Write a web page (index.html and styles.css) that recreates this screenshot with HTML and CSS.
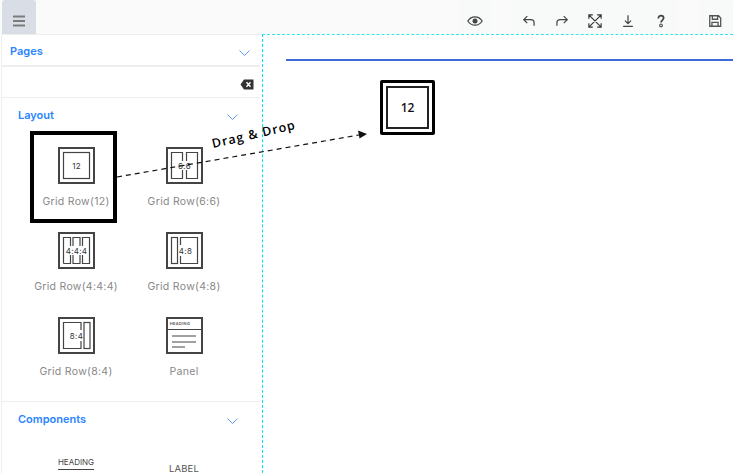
FILE: index.html
```html
<!DOCTYPE html>
<html>
<head>
  <meta charset="utf-8">
  <meta name="viewport" content="width=device-width">
  <link rel="stylesheet" href="styles.css">
  <title>Page builder</title>
</head>
<body>
  <header class="topbar">
    <button type="button" class="menu-btn" aria-label="Menu">
      <svg width="14" height="12" viewBox="0 0 14 12"><path d="M1 1.500h12M1 6h12M1 10.500h12" stroke="#7b7b7b" stroke-width="1.800" fill="none"/></svg>
    </button>
    <div class="tools">
      <div class="tool-group group-view">
        <svg width="16" height="16" viewBox="0 0 16 16"><path d="M.8 8C2.800 5 5.200 3.800 8 3.800S13.200 5 15.200 8c-2 3-4.400 4.200-7.200 4.200S2.800 11 .8 8z" fill="none" stroke="#444" stroke-width="1.200"/><circle cx="8" cy="8" r="2.500" fill="#444"/></svg>
      </div>
      <div class="tool-group group-edit">
        <svg width="14" height="14" viewBox="0 0 16 16"><path d="M6 2.500L2 6.500l4 4M2 6.500h8c2.500 0 3.800 1.500 3.800 3.500v3.500" fill="none" stroke="#444" stroke-width="1.400"/></svg>
        <svg width="14" height="14" viewBox="0 0 16 16"><path d="M10 2.500l4 4-4 4M14 6.500H6C3.500 6.500 2.200 8 2.200 10v3.500" fill="none" stroke="#444" stroke-width="1.400"/></svg>
        <svg width="14" height="14" viewBox="0 0 16 16"><path d="M1 5.500V1h4.500M10.500 1H15v4.500M15 10.500V15h-4.500M5.500 15H1v-4.500M1.500 1.500l13 13M14.500 1.500l-13 13" fill="none" stroke="#333" stroke-width="1.300"/></svg>
        <svg width="14" height="14" viewBox="0 0 16 16"><path d="M8 1.500v9M4.500 7.500L8 11l3.500-3.500M2.500 14.200h11" fill="none" stroke="#444" stroke-width="1.400"/></svg>
        <svg width="14" height="14" viewBox="0 0 16 16"><path d="M5 5c0-2 1.300-3.200 3-3.200S11 3 11 4.700C11 7 8 7 8 9.800" fill="none" stroke="#444" stroke-width="2"/><circle cx="8" cy="13" r="1.500" fill="none" stroke="#444" stroke-width="1.200"/></svg>
      </div>
      <div class="tool-group group-save">
        <svg width="14" height="14" viewBox="0 0 16 16"><path d="M2 2h10l2.500 2.500V14H2zM5 2v4h6V2M4.500 14V9.500h7V14" fill="none" stroke="#555" stroke-width="1.500"/></svg>
      </div>
    </div>
  </header>

  <div class="workspace">
    <aside class="sidebar">
      <div class="panel-head head-pages">
        <span>Pages</span>
        <svg class="chev" width="11" height="6" viewBox="0 0 11 6"><path d="M.5.500l5 5 5-5" fill="none" stroke="#5a9ff5"/></svg>
      </div>
      <div class="search-row">
        <svg width="14" height="11" viewBox="0 0 14 11"><path d="M4 .5h9.500v10H4L.5 5.500z" fill="#333"/><path d="M6.500 3.200l4 4.600M10.500 3.200l-4 4.600" stroke="#fff" stroke-width="1.400"/></svg>
      </div>
      <div class="panel-head head-inner">
        <span>Layout</span>
        <svg class="chev" width="11" height="6" viewBox="0 0 11 6"><path d="M.5.500l5 5 5-5" fill="none" stroke="#5a9ff5"/></svg>
      </div>
      <div class="blocks">
        <div class="block">
          <svg width="37" height="37" viewBox="0 0 37 37"><rect x="1" y="1" width="35" height="35" class="ico-outer"/><rect x="5.500" y="5.500" width="26" height="26" class="ico-inner"/><text x="18.500" y="21.500" class="ico-text">12</text></svg>
          <span>Grid Row(12)</span>
        </div>
        <div class="block">
          <svg width="37" height="37" viewBox="0 0 37 37"><rect x="1" y="1" width="35" height="35" class="ico-outer"/><path d="M16.500 14V5.500h-11v26h11V23M20.500 14V5.500h11v26h-11V23" class="ico-inner"/><text x="18.500" y="21.500" class="ico-text">6:6</text></svg>
          <span>Grid Row(6:6)</span>
        </div>
        <div class="block">
          <svg width="37" height="37" viewBox="0 0 37 37"><rect x="1" y="1" width="35" height="35" class="ico-outer"/><path d="M5.500 31.500V5.500h7V14M15 14V5.500h7V14M24.500 14V5.500h7v26h-7V23M15 23v8.500h7V23M12.500 23v8.500h-7" class="ico-inner"/><text x="18.500" y="21.500" class="ico-text">4:4:4</text></svg>
          <span>Grid Row(4:4:4)</span>
        </div>
        <div class="block">
          <svg width="37" height="37" viewBox="0 0 37 37"><rect x="1" y="1" width="35" height="35" class="ico-outer"/><rect x="5.500" y="5.500" width="6" height="26" class="ico-inner"/><path d="M14.500 13V5.500h17v26h-17V24" class="ico-inner"/><text x="19.500" y="21.500" class="ico-text">4:8</text></svg>
          <span>Grid Row(4:8)</span>
        </div>
        <div class="block">
          <svg width="37" height="37" viewBox="0 0 37 37"><rect x="1" y="1" width="35" height="35" class="ico-outer"/><path d="M23 13V5.500H5.500v26H23V24" class="ico-inner"/><rect x="26" y="5.500" width="6" height="26" class="ico-inner"/><text x="18.500" y="21.500" class="ico-text">8:4</text></svg>
          <span>Grid Row(8:4)</span>
        </div>
        <div class="block">
          <svg width="37" height="37" viewBox="0 0 37 37"><rect x="1" y="1" width="35" height="35" class="ico-outer"/><path d="M1 12.500h35M6 19h24M6 25h24M6 30h13" class="ico-inner"/><text x="14" y="8" class="ico-small">HEADING</text></svg>
          <span>Panel</span>
        </div>
      </div>
      <div class="panel-head head-inner head-components">
        <span>Components</span>
        <svg class="chev" width="11" height="6" viewBox="0 0 11 6"><path d="M.5.500l5 5 5-5" fill="none" stroke="#5a9ff5"/></svg>
      </div>
      <div class="components">
        <div class="comp-heading">HEADING</div>
        <div class="comp-label">LABEL</div>
      </div>
    </aside>

    <main class="canvas">
      <div class="blue-rule"></div>
      <div class="dropped"><div class="dropped-inner">12</div></div>
    </main>
  </div>

  <!-- drag hint on top of everything -->
  <div class="drag-frame"></div>
  <svg class="drag-arrow" width="260" height="60" viewBox="0 0 260 60">
    <path d="M1 50L243 8" fill="none" stroke="#111" stroke-width="1.200" stroke-dasharray="5 4"/>
    <path d="M251 7l-9-3.500 1.500 8z" fill="#111"/>
  </svg>
  <div class="drag-text">Drag &amp; Drop</div>
</body>
</html>
```

FILE: styles.css
```css
* {
  box-sizing: border-box;
}
html, body {
  height: 100%;
}
body {
  margin: 0;
  overflow: hidden;
  background: #fff;
  font-family: Inter, "Liberation Sans", sans-serif;
  color: #888;
}

/* top bar */
.topbar {
  display: flex;
  height: 34px;
  padding-left: 2px;
  background: #fafafa;
  justify-content: space-between;
}
.menu-btn {
  width: 34px;
  height: 34px;
  padding: 8px 0 0;
  border: 0;
  border-radius: 3px 3px 0 0;
  background: #d9dee6;
  display: flex;
  align-items: center;
  justify-content: center;
}
.tools {
  display: flex;
}
.tool-group {
  display: flex;
  align-items: center;
  height: 34px;
  padding-top: 8px;
  background: #f8f9f9;
  border-radius: 4px;
}
.group-view {
  width: 33px;
  justify-content: center;
  margin-right: 21px;
}
.group-edit {
  width: 166px;
  padding-left: 10px;
  gap: 19px;
  margin-right: 20px;
}
.group-save {
  width: 35px;
  padding-left: 10px;
}

/* left column */
.workspace {
  display: flex;
  height: 439px;
}
.sidebar {
  width: 261px;
  margin-left: 1px;
  padding-right: 2px;
  border-left: 1px solid #eee;
  border-top: 1px solid #eee;
  overflow: hidden;
}
.panel-head {
  display: flex;
  align-items: flex-start;
  justify-content: space-between;
  font-size: 11px;
  font-weight: 600;
  color: #2a85ff;
}
.head-pages {
  height: 32px;
  padding: 9px 10px 0 8px;
  border-bottom: 2px solid #eee;
}
.head-inner {
  padding: 10px 22px 0 16px;
  height: 32px;
}
.chev {
  margin-top: 6px;
}
.search-row {
  height: 31px;
  padding: 12px 6px 0 0;
  border-bottom: 1px solid #eee;
  display: flex;
  justify-content: flex-end;
  align-items: flex-start;
}
.blocks {
  display: grid;
  grid-template-columns: 108px 108px;
  grid-auto-rows: 85px;
  padding: 18px 0 0 20px;
  margin-top: -1px;
  height: 273px;
  border-bottom: 1px solid #eee;
}
.block {
  display: flex;
  flex-direction: column;
  align-items: center;
  gap: 11px;
  font-size: 10.500px;
  letter-spacing: .3px;
  line-height: 14px;
}
.block svg {
  display: block;
}
.ico-outer {
  fill: none;
  stroke: #444;
  stroke-width: 2;
}
.ico-inner {
  fill: none;
  stroke: #444;
  stroke-width: 1.200;
}
.ico-text {
  font-size: 8px;
  fill: #333;
  text-anchor: middle;
}
.ico-small {
  font-size: 4px;
  font-weight: 600;
  fill: #555;
  text-anchor: middle;
}

.head-components {
  height: 32px;
  padding-top: 10px;
}
.components {
  display: grid;
  grid-template-columns: 108px 108px;
  padding: 23px 0 0 20px;
}
.comp-heading {
  justify-self: center;
  align-self: start;
  font-size: 8px;
  line-height: 10px;
  color: #444;
  padding-bottom: 2px;
  border-bottom: 1.500px solid #444;
}
.comp-label {
  justify-self: center;
  margin-top: 6px;
  font-size: 9.500px;
  line-height: 11px;
  letter-spacing: .2px;
  color: #555;
}

/* page being built */
.canvas {
  flex: 1;
  border-left: 1px dashed #00e5f5;
  border-top: 1px dashed #2ee6f0;
  padding: 24px 0 0 23px;
}
.blue-rule {
  height: 2px;
  background: #3f6bd8;
}
.dropped {
  width: 55px;
  height: 55px;
  margin: 19px 0 0 94px;
  border: 3px solid #000;
  border-radius: 2px;
  padding: 3px;
}
.dropped-inner {
  width: 100%;
  height: 100%;
  border: 2px solid #222;
  display: flex;
  align-items: center;
  justify-content: center;
  font-family: "Open Sans", sans-serif;
  font-size: 12px;
  font-weight: 600;
  color: #111;
}

/* drag hint */
.drag-frame {
  position: absolute;
  left: 30px;
  top: 131px;
  width: 87px;
  height: 92px;
  border: 4px solid #000;
}
.drag-arrow {
  position: absolute;
  left: 116px;
  top: 127px;
}
.drag-text {
  position: absolute;
  left: 214px;
  top: 135px;
  font-family: "Open Sans", sans-serif;
  font-size: 12.500px;
  font-weight: 600;
  letter-spacing: 1px;
  color: #000;
  transform: rotate(-13deg);
  transform-origin: left bottom;
  white-space: nowrap;
}
```
